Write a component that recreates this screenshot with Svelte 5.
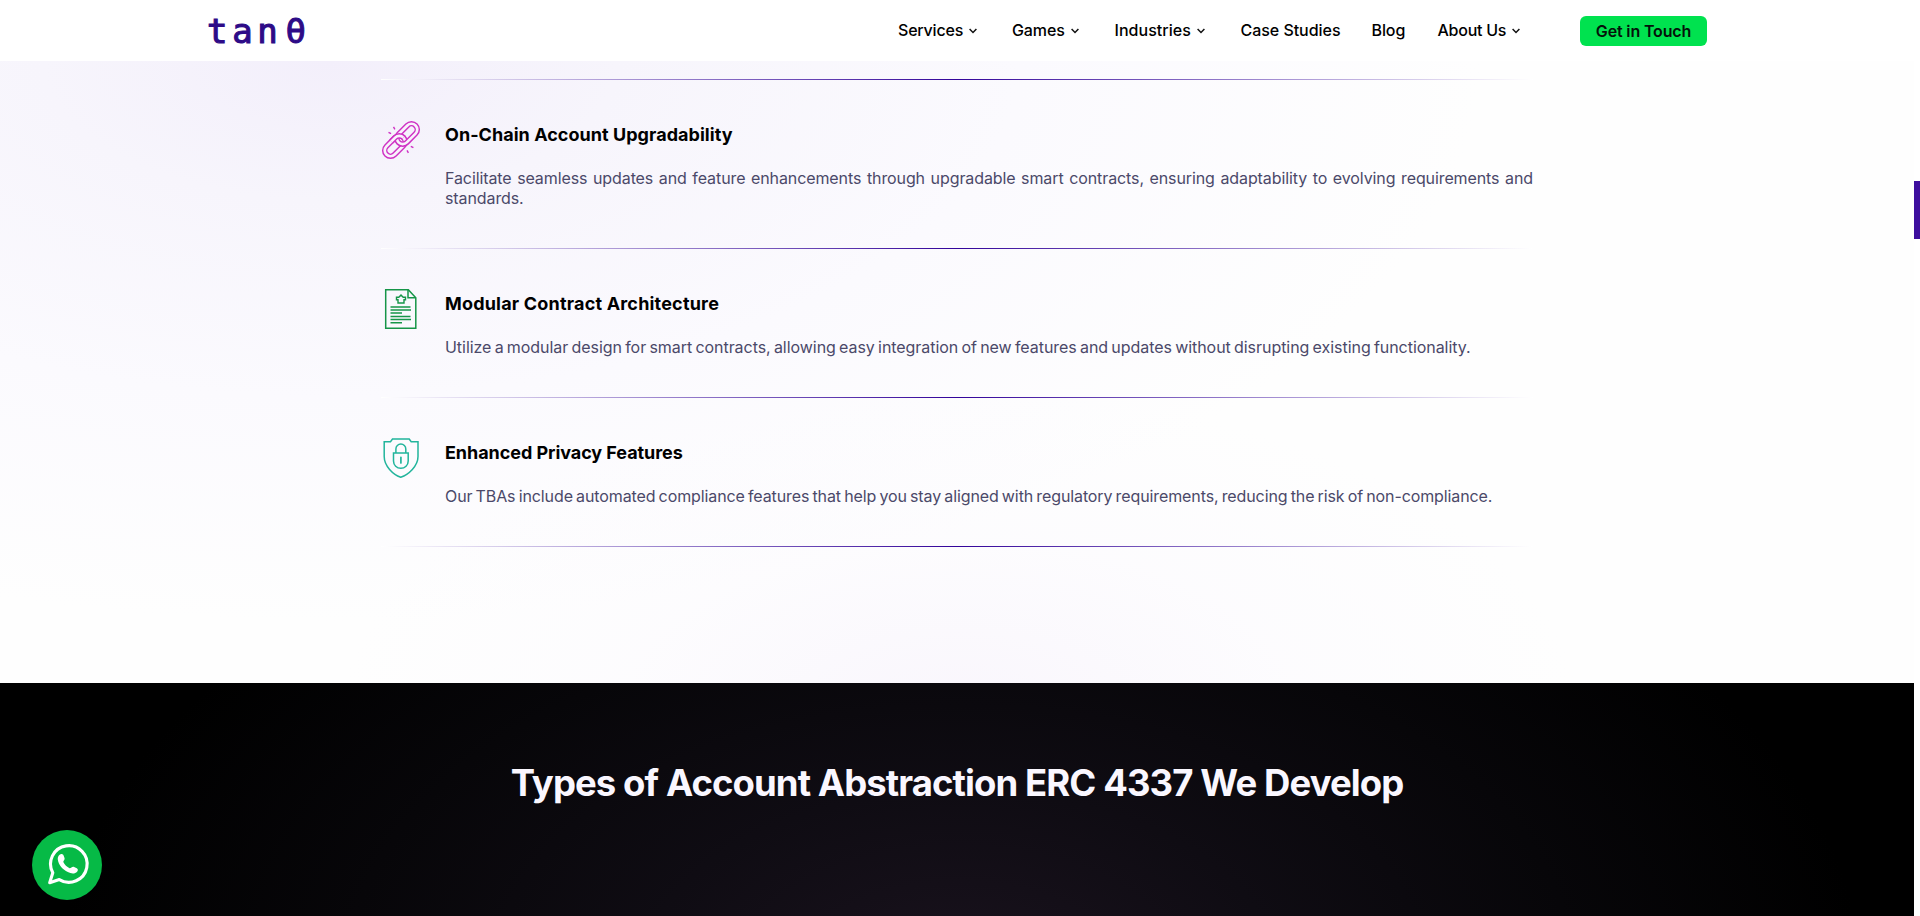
<script>
  const nav = [
    { label: 'Services', menu: true, spacing: -0.2 },
    { label: 'Games', menu: true, spacing: -0.1 },
    { label: 'Industries', menu: true, spacing: 0.04 },
    { label: 'Case Studies', menu: false, spacing: -0.04 },
    { label: 'Blog', menu: false, spacing: -0.1 },
    { label: 'About Us', menu: true, spacing: -0.25 }
  ];
  const features = [
    {
      icon: 'chain',
      title: 'On-Chain Account Upgradability',
      text: 'Facilitate seamless updates and feature enhancements through upgradable smart contracts, ensuring adaptability to evolving requirements and standards.',
      titleSpacing: 0.04,
      textSpacing: -0.1
    },
    {
      icon: 'contract',
      title: 'Modular Contract Architecture',
      text: 'Utilize a modular design for smart contracts, allowing easy integration of new features and updates without disrupting existing functionality.',
      titleSpacing: 0.19,
      textSpacing: -0.045
    },
    {
      icon: 'shield',
      title: 'Enhanced Privacy Features',
      text: 'Our TBAs include automated compliance features that help you stay aligned with regulatory requirements, reducing the risk of non-compliance.',
      titleSpacing: -0.06,
      textSpacing: -0.105
    }
  ];
</script>

{#snippet link(x)}
  <rect {x} y="-5.8" width="24" height="11.6" rx="5.8" stroke="#cf32c4" stroke-width="5.6" />
  <rect {x} y="-5.8" width="24" height="11.6" rx="5.8" stroke="#f8f3fc" stroke-width="2.7" />
{/snippet}

<div class="page">
  <header>
    <div class="logo"><span>tan</span><span class="theta">θ</span></div>
    <nav>
      {#each nav as item}
        <a href="#top">
          <span style="letter-spacing: {item.spacing}px">{item.label}</span>
          {#if item.menu}
            <svg width="8" height="6" viewBox="0 0 8 6"><path d="M.6 1 4 4.500 7.400 1" fill="none" stroke="#111" stroke-width="1.5" /></svg>
          {/if}
        </a>
      {/each}
    </nav>
    <button>Get in Touch</button>
  </header>

  <section class="features">
    <div class="list">
      {#each features as f}
        <article>
          <div class="icon">
            {#if f.icon === 'chain'}
              <svg width="40" height="40" viewBox="0 0 40 40" fill="none">
                <defs><clipPath id="upper"><rect x="-8" y="-10" width="16" height="10" /></clipPath></defs>
                <g transform="translate(20 20) rotate(-45)">
                  {@render link(-20.6)}
                  {@render link(-3.4)}
                  <g clip-path="url(#upper)">{@render link(-20.6)}</g>
                </g>
                <path d="m12.500 6.800 1.400 2.500M7.500 12.300l2.600 1.400M29.800 26.300l2.600 1.400M26 30.400l1.400 2.500" stroke="#cf32c4" stroke-width="1.4" />
              </svg>
            {:else if f.icon === 'contract'}
              <svg width="40" height="40" viewBox="0 0 40 40" fill="none" stroke="#169548" stroke-width="1.5">
                <path d="M4.700.7h22.600l7.500 8v30.600H4.700z" />
                <path d="M27 .7v8h8" />
                <path d="M17 14v-3.300h-1.500V8.200h2.300L20 6l2.200 2.200h2.300v2.500H23V14z" stroke-width="1.4" />
                <path d="M9.500 18h20M9.500 21h20.500M9.500 24h11.500M9.500 27.500h20M9.500 30.500h20.500M9.500 33.700h11.500" stroke-width="1.5" />
              </svg>
            {:else}
              <svg width="40" height="40" viewBox="0 0 40 40" fill="none" stroke="#22b59c" stroke-width="1.5">
                <path d="M19.700 1h8.500l2 2.700h6.800v14.800C37 28 27.700 36.500 19.700 39.200 12 36.500 3.200 28 3.200 18.500V3.700h6.300l2-2.700z" />
                <path d="M12.500 15h14.700v8a7.350 7.350 0 0 1-14.700 0z" />
                <path d="M14.900 15v-4a4.950 4.950 0 0 1 9.900 0v4" />
                <path d="M19.900 19.400v5.600" stroke-width="1.700" stroke-linecap="round" />
              </svg>
            {/if}
          </div>
          <div class="body">
            <h3 style="letter-spacing: {f.titleSpacing}px">{f.title}</h3>
            <p style="letter-spacing: {f.textSpacing}px">{f.text}</p>
          </div>
        </article>
      {/each}
    </div>
  </section>

  <section class="types">
    <h2>Types of Account Abstraction ERC 4337 We Develop</h2>
  </section>
</div>

<div class="track"><div class="thumb"></div></div>

<a class="chat" href="#chat" aria-label="WhatsApp">
  <svg width="70" height="70" viewBox="0 0 70 70" fill="none">
    <path d="M17.700 52.700 20.800 42.800A18.300 18.300 0 1 1 27.300 49.600z" stroke="#fff" stroke-width="3.100" stroke-linejoin="round" />
    <path d="M27.600 24.700c1.500-1.200 3.400-.7 4 .8l1 2.800c.4 1.300-1.300 2.500-1.300 3.700 1.400 2.800 3.600 4.900 6.300 6.200 1.300.2 2.500-2 4-1.500l3.200 1.500c1.300.7 1.400 2.200.3 3.600-2.200 2.400-6 2.100-9.300.3-5-2.600-9.300-7.100-10-12.600-.2-1.800.3-3.600 1.800-4.800z" fill="#fff" />
  </svg>
</a>

<style>
  :global(body) {
    margin: 0;
    overflow: hidden;
    background: #fff;
    font-family: Inter, sans-serif;
  }
  .page {
    width: 1914px;
    height: 916px;
    overflow: hidden;
    display: flex;
    flex-direction: column;
  }
  header {
    box-sizing: border-box;
    flex: none;
    height: 61px;
    padding: 0 207px;
    display: flex;
    align-items: center;
    background: #fff;
  }
  .logo {
    width: 691px;
    font: 34px/36px "DejaVu Sans Mono", monospace;
    letter-spacing: 4.700px;
    color: #2d0b87;
    -webkit-text-stroke: 1.100px #2d0b87;
  }
  .theta { margin-left: 3px; }
  nav {
    display: grid;
    grid-template-columns: 114px 102.500px 126px 131px 66px 142.500px;
    padding-bottom: 2px;
    font-size: 16px;
    font-weight: 500;
  }
  nav a {
    display: flex;
    align-items: center;
    gap: 6px;
    color: #000;
    text-decoration: none;
    white-space: nowrap;
    line-height: 20px;
  }
  nav svg { margin-top: 2px; }
  button {
    box-sizing: border-box;
    width: 127px;
    height: 30px;
    padding: 0;
    margin-top: 0;
    border: 0;
    border-radius: 6px;
    background: #00e24f;
    color: #05120a;
    font: 600 16px/20px Inter, sans-serif;
    letter-spacing: -0.140px;
    white-space: nowrap;
  }
  .features {
    flex: none;
    padding: 18px 0 136px;
    background:
      radial-gradient(ellipse 620px 330px at 960px 660px, rgba(248, 244, 252, .8), rgba(251, 249, 254, .4) 55%, rgba(255, 255, 255, 0)),
      radial-gradient(ellipse 1150px 560px at 330px 0, #f3effb 0%, #f7f5fc 25%, #fbfafe 60%, rgba(254, 254, 254, 0) 100%),
      #fefefe;
  }
  .list {
    width: 1152px;
    margin: 0 auto;
  }
  .list::before,
  article::after {
    content: "";
    display: block;
    height: 1px;
    background: linear-gradient(90deg, #fff, #33049a 50%, #fff);
  }
  article {
    display: grid;
    grid-template-columns: 40px 1fr;
    column-gap: 24px;
  }
  article::after { grid-column: 1 / -1; }
  .icon {
    height: 40px;
    padding-top: 40px;
  }
  .icon svg, .chat svg { display: block; }
  .body { padding: 40px 0; }
  h3 {
    margin: 0 0 18px;
    font-size: 18px;
    line-height: 30px;
    font-weight: 700;
    color: #000;
  }
  p {
    margin: 0;
    font-size: 16px;
    line-height: 20px;
    word-spacing: -1.200px;
    color: #4b4969;
    text-align: justify;
  }
  .types {
    flex: 1;
    padding-top: 75px;
    background: radial-gradient(ellipse 900px 520px at 960px 290px, #19121d 0%, #0f0c13 35%, #070609 68%, #000 100%);
  }
  h2 {
    margin: 0;
    text-align: center;
    font-size: 36.500px;
    line-height: 50px;
    font-weight: 700;
    letter-spacing: -0.910px;
    color: #faf7ff;
  }
  .track {
    position: fixed;
    top: 0;
    right: 0;
    width: 6px;
    height: 100%;
    background: #fff;
  }
  .thumb {
    height: 58px;
    margin-top: 181px;
    background: #3d0e9e;
  }
  .chat {
    position: fixed;
    left: 32px;
    top: 830px;
    width: 70px;
    height: 70px;
    border-radius: 50%;
    background: #06ba46;
  }
</style>
